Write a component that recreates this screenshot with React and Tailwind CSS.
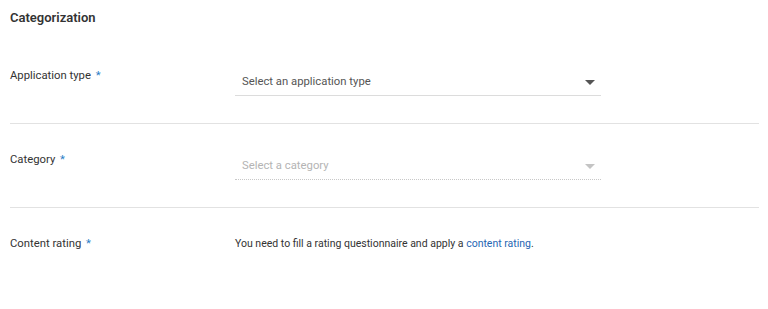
import React from 'react';

const Caret = ({ disabled }) => (
  <svg width="10" height="5" viewBox="0 0 10 5" className="shrink-0">
    <path d="M0 0 L10 0 L5 5 Z" fill={disabled ? '#c4c4c4' : '#555555'} />
  </svg>
);

const Label = ({ children }) => (
  <div className="w-[225px] shrink-0 text-[11.3px] leading-[16px] text-[#333]">
    {children} <span className="ml-[2px] text-[#2a7ec6]">*</span>
  </div>
);

const SelectBox = ({ placeholder, disabled }) => (
  <div
    className={`flex h-[28px] w-[366px] items-center justify-between pl-[7px] pr-[6px] pt-[2px] text-[11.3px] ${
      disabled
        ? 'border-b border-dotted border-[#c8c8c8] text-[#b4b4b4]'
        : 'border-b border-[#dcdcdc] text-[#555]'
    }`}
  >
    <span>{placeholder}</span>
    <Caret disabled={disabled} />
  </div>
);

const Row = ({ label, children, last }) => (
  <div className={`flex h-[84px] items-start pt-[28px] ${last ? '' : 'border-b border-[#e2e2e2]'}`}>
    <Label>{label}</Label>
    {children}
  </div>
);

export default function App() {
  return (
    <div className="h-[309px] w-[768px] bg-white pl-[10px] pr-[9px]" style={{ fontFamily: 'Roboto, "Liberation Sans", sans-serif' }}>
      <div className="h-[40px] pt-[10px] text-[13px] font-semibold leading-[16px] text-[#333]">Categorization</div>

      <Row label="Application type">
        <SelectBox placeholder="Select an application type" />
      </Row>

      <Row label="Category">
        <SelectBox placeholder="Select a category" disabled />
      </Row>

      <Row label="Content rating" last>
        <div className="text-[10.5px] leading-[16px] text-[#333]">
          You need to fill a rating questionnaire and apply a{' '}
          <a href="#" className="text-[#1f66b3]">content rating</a>.
        </div>
      </Row>
    </div>
  );
}
